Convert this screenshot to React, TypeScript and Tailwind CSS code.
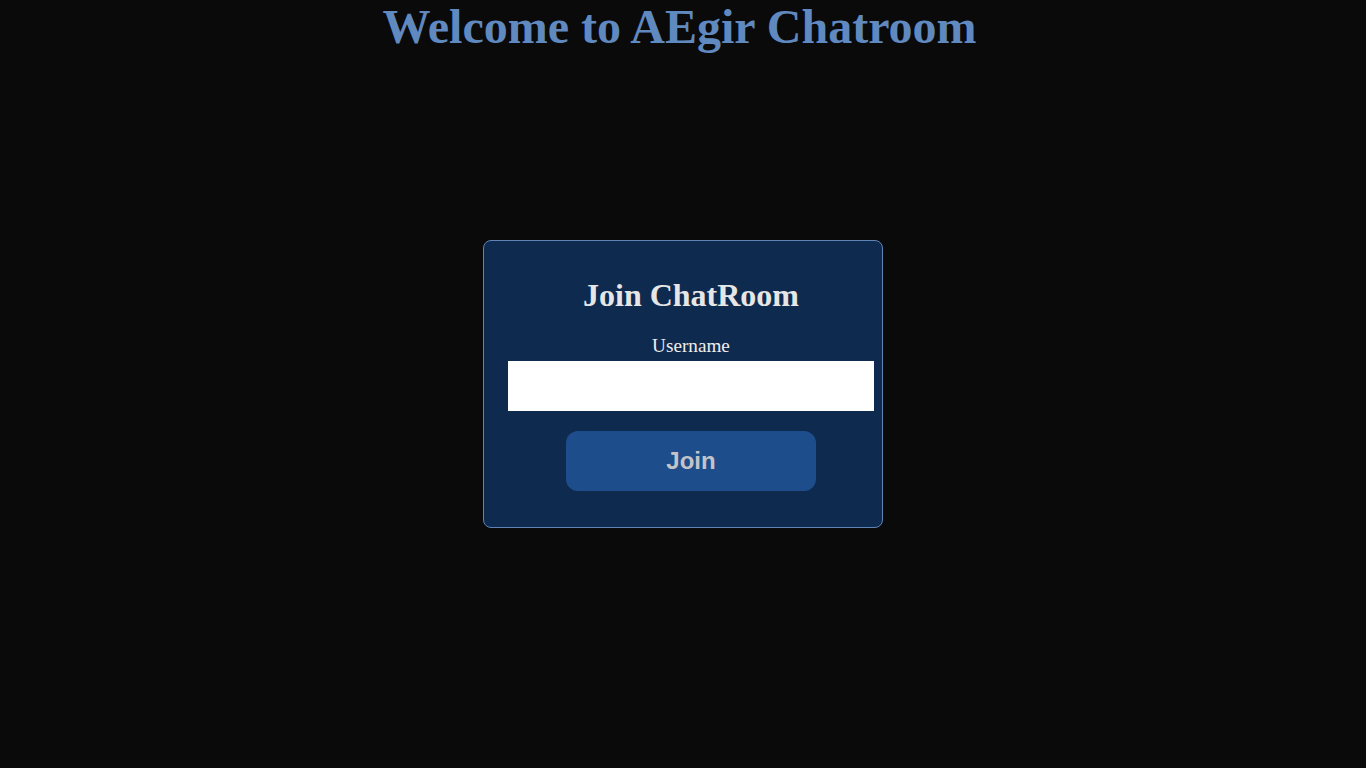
export default function App() {
  return (
    <div className="relative h-screen w-full overflow-hidden bg-[#0a0a0a] font-['Liberation_Serif','Times_New_Roman',serif]">
      <h1 className="m-0 pr-[7px] text-center text-[48px] font-bold leading-[53px] text-[#6089c0]">
        Welcome to AEgir Chatroom
      </h1>

      <div className="absolute left-1/2 top-1/2 w-[400px] -translate-x-1/2 -translate-y-1/2 rounded-lg border border-[#5f83b5] bg-[#0f2a4f] pb-9 pl-6 pr-2 pt-9">
        <h2 className="text-center text-[32px] font-bold leading-[36px] text-[#e6e6e6]">
          Join ChatRoom
        </h2>
        <form className="mt-[22px] flex flex-col items-center" onSubmit={(e) => e.preventDefault()}>
          <label htmlFor="username" className="text-[19.2px] leading-[22px] text-[#eeeeee]">
            Username
          </label>
          <input
            id="username"
            type="text"
            className="mt-1 h-[50px] w-full bg-white px-2 text-black outline-none"
          />
          <button
            type="submit"
            className="mt-5 h-[60px] w-[250px] rounded-xl bg-[#1e4d8c] font-['Liberation_Sans',Arial,sans-serif] text-[24px] font-bold text-[#c4c4c8]"
          >
            Join
          </button>
        </form>
      </div>
    </div>
  );
}
